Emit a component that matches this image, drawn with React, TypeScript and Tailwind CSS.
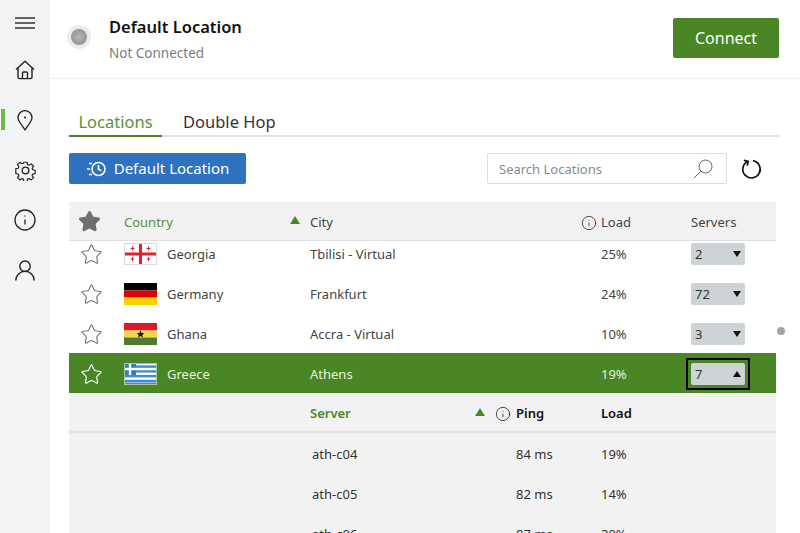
import { Info, Star } from "lucide-react"

const font = { fontFamily: "'Noto Sans', sans-serif" }

function MenuIcon() {
  return (
    <svg width="20" height="12" viewBox="0 0 20 12" stroke="#333" strokeWidth="1.300">
      <path d="M0 1h20M0 6h20M0 11h20" />
    </svg>
  )
}

function HomeIcon() {
  return (
    <svg width="20" height="20" viewBox="0 0 20 20" fill="none" stroke="#222" strokeWidth="1.400" strokeLinejoin="round">
      <path d="M1 9.500 10 1.200l9 8.300" />
      <path d="M3 8v9a1.600 1.600 0 0 0 1.600 1.600h10.800A1.600 1.600 0 0 0 17 17V8" />
      <path d="M7.500 18.500v-5.500a1 1 0 0 1 1-1h3a1 1 0 0 1 1 1v5.500" />
    </svg>
  )
}

function PinIcon() {
  return (
    <svg width="16" height="21" viewBox="0 0 16 21" fill="none" stroke="#222" strokeWidth="1.300">
      <path d="M8 20C5.500 15.500 1 11.500 1 7.700a7 7 0 0 1 14 0C15 11.500 10.500 15.500 8 20z" strokeLinejoin="round" />
      <circle cx="8" cy="7.500" r="1.100" fill="#222" stroke="none" />
    </svg>
  )
}

function GearIcon() {
  return (
    <svg width="21" height="21" viewBox="0 0 24 24" fill="none" stroke="#222" strokeWidth="1.500" strokeLinejoin="round">
      <path d="M9.900 1.500h4.200l.6 3.100 1.900.8 2.600-1.800 3 3-1.800 2.600.8 1.900 3.100.6v4.200l-3.100.6-.8 1.900 1.800 2.600-3 3-2.600-1.800-1.900.8-.6 3.100H9.900l-.6-3.100-1.900-.8-2.600 1.800-3-3 1.800-2.600-.8-1.900-3.100-.6V9.700l3.100-.6.8-1.900-1.800-2.600 3-3 2.600 1.800 1.900-.8z" transform="translate(1.200 1.200) scale(.9)" />
      <circle cx="12" cy="12" r="3.800" />
    </svg>
  )
}

function UserIcon() {
  return (
    <svg width="20" height="21" viewBox="0 0 20 21" fill="none" stroke="#222" strokeWidth="1.400">
      <circle cx="10" cy="6.200" r="5.200" />
      <path d="M.8 20.500a9.200 9.200 0 0 1 18.400 0" />
    </svg>
  )
}

function HistoryIcon() {
  return (
    <svg width="21" height="16" viewBox="0 0 21 16" fill="none" stroke="#fff" strokeWidth="1.600">
      <circle cx="12.500" cy="8" r="6.500" />
      <path d="M12.500 4v4.300l2.800 1.500" />
      <path d="M3 2.500h3M1 8h3M3 13.500h3" />
    </svg>
  )
}

function SearchIcon() {
  return (
    <svg width="20" height="20" viewBox="0 0 20 20" fill="none" stroke="#666" strokeWidth="1">
      <circle cx="12.500" cy="7.500" r="6.500" />
      <path d="M7.800 12.200 1 19" />
    </svg>
  )
}

function RefreshIcon() {
  return (
    <svg width="22" height="22" viewBox="0 0 22 22" fill="none" stroke="#111" strokeWidth="1.700">
      <path d="M7 3.300a8.700 8.700 0 1 0 5-.6" />
      <path d="M2.900 2.400 7.200 3.300 6.200 7.600" />
    </svg>
  )
}

function SortUp({ className }: { className: string }) {
  return <span className={`inline-block w-0 h-0 border-l-[5px] border-r-[5px] border-b-[8px] border-l-transparent border-r-transparent ${className}`} />
}

function GeorgiaFlag() {
  return (
    <svg width="33" height="22" viewBox="0 0 33 22">
      <rect x=".5" y=".5" width="32" height="21" fill="#fff" stroke="#dcdcdc" />
      <rect x="15" y="1" width="3" height="20" fill="#e0202c" />
      <rect x="1" y="9.500" width="31" height="3" fill="#e0202c" />
      <path d="M8 3.500h1v1.500h1.500v1H9v1.500H8V6H6.500V5H8zM24 3.500h1v1.500h1.500v1H25v1.500h-1V6h-1.500V5H24zM8 14h1v1.500h1.500v1H9V18H8v-1.500H6.500v-1H8zM24 14h1v1.500h1.500v1H25V18h-1v-1.500h-1.500v-1H24z" fill="#e0202c" />
    </svg>
  )
}

function GermanyFlag() {
  return (
    <svg width="33" height="22" viewBox="0 0 33 22">
      <rect width="33" height="7.500" fill="#000" />
      <rect y="7.500" width="33" height="7" fill="#dd0000" />
      <rect y="14.500" width="33" height="7.500" fill="#ffce00" />
    </svg>
  )
}

function GhanaFlag() {
  return (
    <svg width="33" height="22" viewBox="0 0 33 22">
      <rect width="33" height="7.500" fill="#e0162b" />
      <rect y="7.500" width="33" height="7" fill="#f5d547" />
      <rect y="14.500" width="33" height="7.500" fill="#4f7a35" />
      <path d="M16.500 7.500l1.100 2.500 2.700.2-2.100 1.700.7 2.600-2.400-1.400-2.400 1.400.7-2.600-2.100-1.700 2.700-.2z" fill="#111" />
    </svg>
  )
}

function GreeceFlag() {
  const stripes = [2.400, 7.200, 12, 16.800]
  return (
    <svg width="33" height="22" viewBox="0 0 33 22">
      <rect width="33" height="22" fill="#fff" />
      {stripes.map((y) => (
        <rect key={y} y={y} width="33" height="2.400" fill="#3d8bd8" />
      ))}
      <rect y="19.600" width="33" height="2.400" fill="#3d8bd8" />
      <rect width="12" height="12" fill="#2f7fd0" />
      <rect x="4.800" width="2.400" height="12" fill="#fff" />
      <rect y="4.800" width="12" height="2.400" fill="#fff" />
      <rect x=".5" y=".5" width="32" height="21" fill="none" stroke="#a9c79a" />
    </svg>
  )
}

const countries = [
  { name: "Georgia", city: "Tbilisi - Virtual", load: "25%", servers: "2", flag: <GeorgiaFlag /> },
  { name: "Germany", city: "Frankfurt", load: "24%", servers: "72", flag: <GermanyFlag /> },
  { name: "Ghana", city: "Accra - Virtual", load: "10%", servers: "3", flag: <GhanaFlag /> },
]

const servers = [
  { name: "ath-c04", ping: "84 ms", load: "19%" },
  { name: "ath-c05", ping: "82 ms", load: "14%" },
  { name: "ath-c06", ping: "87 ms", load: "20%" },
]

const gridCols = "grid grid-cols-[55px_43px_143px_291px_90px_85px] items-center"
const serverCols = "grid grid-cols-[241px_206px_85px_175px] items-center h-[40px] pt-[4px]"

export default function App() {
  return (
    <div className="relative flex w-[800px] h-[533px] overflow-hidden bg-white" style={font}>
      {/* Sidebar */}
      <aside className="relative w-[50px] shrink-0 bg-[#f3f4f6] flex flex-col items-center pt-[17px]">
        <MenuIcon />
        <div className="mt-[16px] h-[50px] flex items-center justify-center"><HomeIcon /></div>
        <div className="h-[50px] flex items-center justify-center"><PinIcon /></div>
        <div className="h-[50px] flex items-center justify-center"><GearIcon /></div>
        <div className="h-[50px] flex items-center justify-center"><Info size={24} strokeWidth={1.300} className="text-[#222]" /></div>
        <div className="h-[50px] flex items-center justify-center"><UserIcon /></div>
        <span className="absolute left-[1px] top-[109px] w-[4px] h-[21px] bg-[#6cbb45]" />
      </aside>

      <div className="flex-1 min-w-0 flex flex-col">
        {/* Header */}
        <header className="h-[79px] shrink-0 border-b border-[#eeeeee] flex items-center pl-[17px] pr-[21px]">
          <div className="w-[24px] h-[24px] rounded-full bg-[#ececec] flex items-center justify-center mt-[-4px]">
            <div className="w-[16px] h-[16px] rounded-full bg-[radial-gradient(circle,#b5b5b5,#888888)]" />
          </div>
          <div className="ml-[18px] flex-1">
            <div className="text-[16.500px] leading-[24px] font-semibold text-[#111]">Default Location</div>
            <div className="text-[13.500px] leading-[20px] mt-[4px] text-[#7c7c7c]">Not Connected</div>
          </div>
          <button className="w-[106px] h-[40px] rounded-[2px] bg-[#4a8626] text-white text-[16px] mt-[-3px]">Connect</button>
        </header>

        <main className="flex-1 min-h-0 pl-[19px] pr-[20px] flex flex-col">
          {/* Tabs */}
          <div className="mt-[28px] flex items-end h-[30px] border-b-2 border-[#e2e2e2] text-[16.500px] leading-[28px]">
            <div className="w-[93px] h-[30px] -mb-[2px] pt-[1px] border-b-2 border-[#4a8626] text-center text-[#5a9236]">Locations</div>
            <div className="ml-[21px] h-[30px] pt-[3px] text-[#333]">Double Hop</div>
          </div>

          {/* Toolbar */}
          <div className="mt-[16px] flex items-center h-[31px]">
            <button className="w-[177px] h-[31px] rounded-[2px] bg-[#2e72c0] text-white text-[15px] flex items-center justify-center gap-[7px]">
              <HistoryIcon />
              Default Location
            </button>
            <div className="ml-auto w-[240px] h-[31px] border border-[#dddddd] rounded-[2px] flex items-center pl-[11px] pr-[13px] text-[13px] text-[#8a8a8a]">
              <span className="flex-1 pt-[2px]">Search Locations</span>
              <SearchIcon />
            </div>
            <div className="w-[53px] flex justify-center pr-[3px]"><RefreshIcon /></div>
          </div>

          {/* Table header */}
          <div className={`${gridCols} w-[707px] mt-[18px] h-[39px] shrink-0 pt-[3px] bg-[#f1f1f1] border-b border-[#dfdfdf] text-[13px]`}>
            <div className="pl-[9px] -mt-[3px]"><Star size={23} fill="#6f6f6f" stroke="#6f6f6f" /></div>
            <div className="col-span-2 flex items-center pr-[10px] text-[#5a9236]">
              <span className="flex-1">Country</span>
              <SortUp className="border-b-[#4a8626] mb-[6px]" />
            </div>
            <div className="flex items-center text-[#444]">
              <span className="flex-1">City</span>
              <Info size={16} strokeWidth={1.200} className="text-[#222] mr-[4px]" />
            </div>
            <div className="text-[#444]">Load</div>
            <div className="text-[#444]">Servers</div>
          </div>

          {/* Country list */}
          <div className="flex-1 min-h-0 overflow-hidden w-[707px]">
            <div className="-mt-[8px]">
              {countries.map((c) => (
                <div key={c.name} className={`${gridCols} h-[40px] pt-[2px] text-[13px] text-[#444]`}>
                  <div className="pl-[11px]"><Star size={23} strokeWidth={1.200} className="text-[#777]" /></div>
                  <div className="h-[22px]">{c.flag}</div>
                  <div className="pt-[2px]">{c.name}</div>
                  <div className="pt-[2px]">{c.city}</div>
                  <div className="pt-[2px]">{c.load}</div>
                  <div className="w-[54px] h-[22px] rounded-[2px] bg-[#ced3d6] flex items-center justify-between pl-[4px] pr-[4px] text-[#333]">
                    <span className="pt-[2px]">{c.servers}</span>
                    <span className="w-0 h-0 border-l-[4.500px] border-r-[4.500px] border-t-[6px] border-l-transparent border-r-transparent border-t-[#111]" />
                  </div>
                </div>
              ))}

              {/* Selected country */}
              <div className={`${gridCols} h-[40px] pt-[2px] bg-[#4a8626] text-[13px] text-[#e6f5d8]`}>
                <div className="pl-[11px]"><Star size={23} strokeWidth={1.200} className="text-white" /></div>
                <div className="h-[22px]"><GreeceFlag /></div>
                <div className="pt-[2px]">Greece</div>
                <div className="pt-[2px]">Athens</div>
                <div className="pt-[2px]">19%</div>
                <div className="relative w-[54px] h-[22px] rounded-[2px] bg-[#ced3d6] flex items-center justify-between pl-[4px] pr-[4px] text-[#333]">
                  <span className="pt-[2px]">7</span>
                  <span className="w-0 h-0 border-l-[4.500px] border-r-[4.500px] border-b-[6px] border-l-transparent border-r-transparent border-b-[#111]" />
                  <span className="absolute -inset-[5px] border-2 border-black" />
                </div>
              </div>

              {/* Server list */}
              <div className="bg-[#f2f2f2]">
                <div className={`${serverCols} border-b-2 border-[#e3e3e3] text-[13px] font-semibold text-[#111]`}>
                  <div />
                  <div className="flex items-center pr-[5px] text-[#4a8626]">
                    <span className="flex-1">Server</span>
                    <SortUp className="border-b-[#4a8626] mb-[4px] mr-[10px]" />
                    <Info size={16} strokeWidth={1.200} className="text-[#222]" />
                  </div>
                  <div>Ping</div>
                  <div>Load</div>
                </div>
                {servers.map((s) => (
                  <div key={s.name} className={`${serverCols} text-[13px] text-[#333]`}>
                    <div />
                    <div className="pl-[2px]">{s.name}</div>
                    <div>{s.ping}</div>
                    <div>{s.load}</div>
                  </div>
                ))}
              </div>
            </div>
          </div>
        </main>
      </div>

      {/* Scroll handle */}
      <span className="absolute left-[777px] top-[327px] w-[8px] h-[8px] rounded-full bg-[#a5a5a5]" />
    </div>
  )
}
